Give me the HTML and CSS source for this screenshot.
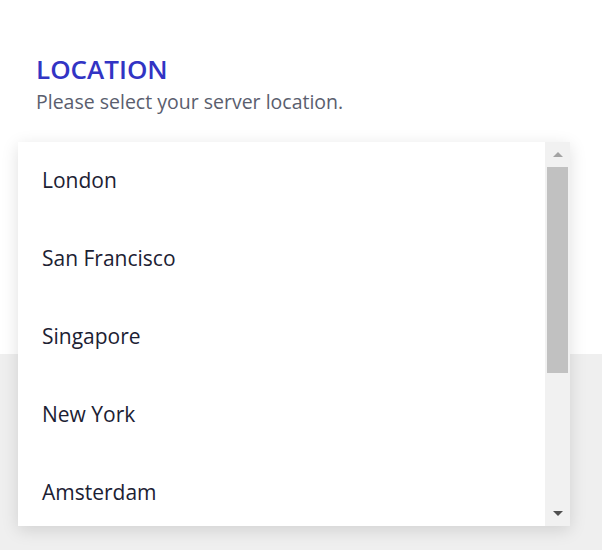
FILE: index.html
```html
<!DOCTYPE html>
<html>
  <head>
    <title>Server location</title>
    <link rel="stylesheet" href="styles.css">
  </head>
  <body>
    <div class="page">
      <div class="panel">
        <h1 class="title">LOCATION</h1>
        <p class="hint">Please select your server location.</p>
      </div>
      <div class="below"></div>

      <div class="dropdown">
        <ul class="options">
          <li>London</li>
          <li>San Francisco</li>
          <li>Singapore</li>
          <li>New York</li>
          <li>Amsterdam</li>
        </ul>
        <div class="scrollbar">
          <div class="arrow up"></div>
          <div class="thumb"></div>
          <div class="track"></div>
          <div class="arrow down"></div>
        </div>
      </div>
    </div>
  </body>
</html>
```

FILE: styles.css
```css
body { margin: 0; font-family: "Open Sans", Lato, Arial, sans-serif; }

.page {
  position: relative;
  width: 602px;
  height: 550px;
  display: flex;
  flex-direction: column;
  overflow: hidden;
}

.panel {
  background: #fff;
  height: 354px;
  padding: 52px 36px 0 36px;
  box-sizing: border-box;
}

.below {
  flex-grow: 1;
  background: #efefef;
}

.title {
  margin: 0;
  font-size: 26px;
  font-weight: 600;
  color: #3234c4;
  line-height: 34px;
}

.hint {
  margin: 3px 0 0 0;
  font-size: 19.5px;
  line-height: 26px;
  color: #5a5e6e;
}

/* dropdown list lies over the page */
.dropdown {
  position: absolute;
  top: 142px;
  left: 18px;
  width: 552px;
  height: 384px;
  display: flex;
  background: #fff;
  box-shadow: 0 4px 16px rgba(0, 0, 0, 0.13);
}

.options {
  list-style: none;
  margin: 0;
  padding: 0;
  flex-grow: 1;
}

.options li {
  height: 78px;
  line-height: 77px;
  padding-left: 24px;
  font-size: 21px;
  color: #1c2133;
}

.scrollbar {
  width: 25px;
  background: #f1f1f1;
  display: flex;
  flex-direction: column;
}

.arrow {
  height: 25px;
  display: flex;
  align-items: center;
  justify-content: center;
}

.arrow::before {
  content: "";
  width: 0;
  height: 0;
  border-left: 5px solid transparent;
  border-right: 5px solid transparent;
}

.arrow.up::before { border-bottom: 5px solid #a3a3a3; }
.arrow.down::before { border-top: 5px solid #505050; }

.thumb {
  height: 206px;
  margin: 0 2px;
  background: #c1c1c1;
}

.track { flex-grow: 1; }
```
